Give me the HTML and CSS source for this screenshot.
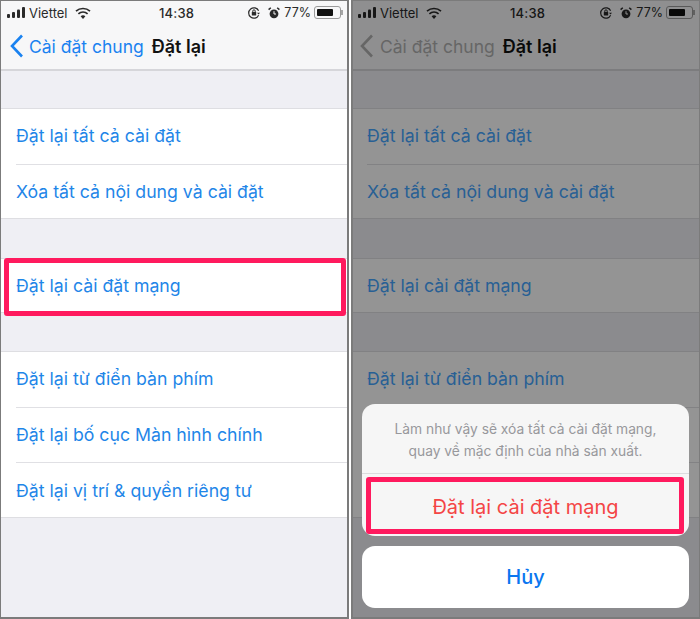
FILE: index.html
```html
<!DOCTYPE html>
<html lang="vi">
<head>
    <meta charset="UTF-8">
    <title>Đặt lại</title>
    <link rel="stylesheet" href="styles.css">
</head>
<body>
    <svg class="sprites" width="0" height="0">
        <symbol id="signal" viewBox="0 0 18 11">
            <rect x="0" y="7" width="3" height="4" rx="1"/>
            <rect x="5" y="5" width="3" height="6" rx="1"/>
            <rect x="10" y="2.5" width="3" height="8.5" rx="1"/>
            <rect x="15" y="0" width="3" height="11" rx="1"/>
        </symbol>
        <symbol id="wifi" viewBox="0 0 16 12">
            <path d="M8 12 5.6 9.2a3.6 3.6 0 0 1 4.8 0Z"/>
            <path d="M1 4.2a10.4 10.4 0 0 1 14 0" fill="none" stroke="currentColor" stroke-width="1.7"/>
            <path d="M3.4 6.8a6.8 6.8 0 0 1 9.2 0" fill="none" stroke="currentColor" stroke-width="1.7"/>
        </symbol>
        <symbol id="lock" viewBox="0 0 12 12">
            <path d="M10.6 8.2A5.2 5.2 0 1 1 10.6 3.8" fill="none" stroke="currentColor" stroke-width="1.2"/>
            <rect x="3.8" y="5" width="4.4" height="3.4" rx=".5"/>
            <path d="M4.8 5V4a1.2 1.2 0 0 1 2.4 0v1" fill="none" stroke="currentColor"/>
            <path d="M9 5.8h3L10.5 7.6Z"/>
        </symbol>
        <symbol id="alarm" viewBox="0 0 12 12">
            <circle cx="6" cy="6.8" r="4.4"/>
            <path d="M.6 2.6 2.8.7M11.4 2.6 9.2.7" stroke="currentColor" stroke-width="1.5" fill="none"/>
            <path d="M6 4.2v2.8h2" stroke="#f7f7f7" fill="none"/>
        </symbol>
    </svg>

    <div class="screens">
        <!-- Reset list -->
        <section class="phone">
            <header class="topbar">
                <div class="status">
                    <div class="status-left">
                        <svg class="ic-signal"><use href="#signal"/></svg>
                        <span>Viettel</span>
                        <svg class="ic-wifi"><use href="#wifi"/></svg>
                    </div>
                    <div class="status-time">14:38</div>
                    <div class="status-right">
                        <svg class="ic-small"><use href="#lock"/></svg>
                        <svg class="ic-small ic-alarm"><use href="#alarm"/></svg>
                        <span class="status-pct">77%</span>
                        <div class="battery"><div class="battery-fill"></div></div>
                    </div>
                </div>
                <nav class="navbar">
                    <svg class="back-chevron" viewBox="0 0 15 24"><path d="M13 1.5 3 12l10 10.5"/></svg>
                    <span class="back-label">Cài đặt chung</span>
                    <span class="nav-title">Đặt lại</span>
                </nav>
            </header>
            <div class="settings">
                <ul class="group">
                    <li>Đặt lại tất cả cài đặt</li>
                    <li>Xóa tất cả nội dung và cài đặt</li>
                </ul>
                <ul class="group group-network">
                    <li>Đặt lại cài đặt mạng</li>
                </ul>
                <ul class="group group-last">
                    <li>Đặt lại từ điển bàn phím</li>
                    <li>Đặt lại bố cục Màn hình chính</li>
                    <li>Đặt lại vị trí &amp; quyền riêng tư</li>
                </ul>
            </div>
            <div class="mark mark-row"></div>
        </section>

        <!-- Same list, with the confirm sheet open -->
        <section class="phone phone-dim">
            <header class="topbar">
                <div class="status">
                    <div class="status-left">
                        <svg class="ic-signal"><use href="#signal"/></svg>
                        <span>Viettel</span>
                        <svg class="ic-wifi"><use href="#wifi"/></svg>
                    </div>
                    <div class="status-time">14:38</div>
                    <div class="status-right">
                        <svg class="ic-small"><use href="#lock"/></svg>
                        <svg class="ic-small ic-alarm"><use href="#alarm"/></svg>
                        <span class="status-pct">77%</span>
                        <div class="battery"><div class="battery-fill"></div></div>
                    </div>
                </div>
                <nav class="navbar">
                    <svg class="back-chevron" viewBox="0 0 15 24"><path d="M13 1.5 3 12l10 10.5"/></svg>
                    <span class="back-label">Cài đặt chung</span>
                    <span class="nav-title">Đặt lại</span>
                </nav>
            </header>
            <div class="settings">
                <ul class="group">
                    <li>Đặt lại tất cả cài đặt</li>
                    <li>Xóa tất cả nội dung và cài đặt</li>
                </ul>
                <ul class="group group-network">
                    <li>Đặt lại cài đặt mạng</li>
                </ul>
                <ul class="group group-last">
                    <li>Đặt lại từ điển bàn phím</li>
                    <li></li>
                    <li></li>
                </ul>
            </div>
            <div class="scrim"></div>
            <div class="sheet">
                <div class="sheet-card">
                    <p class="sheet-msg">Làm như vậy sẽ xóa tất cả cài đặt mạng,<br>quay về mặc định của nhà sản xuất.</p>
                    <div class="sheet-action">Đặt lại cài đặt mạng</div>
                    <div class="mark mark-action"></div>
                </div>
                <div class="sheet-cancel">Hủy</div>
            </div>
        </section>
    </div>
</body>
</html>
```

FILE: styles.css
```css
/* Page */
body {
    margin: 0;
    background-color: white;
    font-family: "Inter", "Liberation Sans", sans-serif;
}

.sprites {
    position: absolute;
}

.screens {
    display: flex;
    justify-content: space-between;
    width: 700px;
    height: 619px;
}

/* Phone frame */
.phone {
    position: relative;
    box-sizing: border-box;
    width: 349px;
    height: 619px;
    overflow: hidden;
    background-color: #efeff4;
    border: 1px solid #7b7b7b;
    border-width: 1px 2px 2px 1px;
}

.phone-dim {
    border-width: 1px 1px 2px 2px;
}

/* Status and nav bar */
.topbar {
    height: 70px;
    box-sizing: border-box;
    background-color: #f7f7f8;
    border-bottom: 2px solid #d6d6da;
    color: #111;
}

.status {
    position: relative;
    display: flex;
    justify-content: space-between;
    align-items: center;
    height: 23px;
    padding: 0 4px 0 6px;
    font-size: 13px;
    color: #2a2a2a;
}

.status-left,
.status-right {
    display: flex;
    align-items: center;
}

.status-time {
    position: absolute;
    left: 158px;
    font-weight: 500;
    letter-spacing: 0.2px;
}

.status-pct {
    font-size: 12.5px;
}

.ic-signal {
    width: 18px;
    height: 11px;
    margin-right: 4px;
    fill: currentColor;
}

.ic-wifi {
    width: 16px;
    height: 12px;
    margin-left: 7px;
    fill: currentColor;
}

.ic-small {
    width: 12px;
    height: 12px;
    margin-right: 8px;
    fill: currentColor;
}

.ic-alarm {
    margin-right: 4px;
}

.battery {
    position: relative;
    box-sizing: border-box;
    width: 27px;
    height: 13px;
    margin-left: 3px;
    margin-right: 2px;
    padding: 2px;
    border: 1px solid #9a9a9a;
    border-radius: 3px;
}

.battery::after {
    content: "";
    position: absolute;
    right: -3px;
    top: 3px;
    width: 2px;
    height: 5px;
    background-color: #a5a5a5;
}

.battery-fill {
    width: 77%;
    height: 100%;
    background-color: #111;
    border-radius: 1px;
}

.navbar {
    display: flex;
    align-items: center;
    height: 44px;
    padding-left: 8px;
}

.back-chevron {
    width: 15px;
    height: 24px;
    margin-right: 5px;
    fill: none;
    stroke: #1a82f0;
    stroke-width: 2.6;
}

.back-label {
    font-size: 17.5px;
    color: #1a82f0;
}

.nav-title {
    margin-left: 8px;
    font-size: 18px;
    font-weight: 600;
    color: #111;
}

/* Settings list */
.settings {
    padding-top: 37px;
}

.group {
    margin: 0;
    padding: 0 0 0 15px;
    list-style: none;
    background-color: white;
    border-top: 1px solid #dedee2;
    border-bottom: 1px solid #dedee2;
}

.group li {
    display: flex;
    align-items: center;
    box-sizing: border-box;
    height: 55.5px;
    padding-bottom: 1px;
    font-size: 17.7px;
    color: #1f86e8;
    border-bottom: 1px solid #e0e0e4;
}

.group li:last-child {
    height: 53.5px;
    padding-top: 1px;
    padding-bottom: 0;
    border-bottom: none;
}

.group-network {
    margin-top: 38.5px;
}

.group-last {
    margin-top: 38px;
}

/* Second phone: inactive tint under the scrim */
.phone-dim .status {
    padding-left: 5px;
}

.phone-dim .status-time {
    left: 157px;
}

.phone-dim .navbar {
    padding-left: 6px;
}

.phone-dim .back-chevron {
    margin-right: 6px;
    stroke: #b0b0b0;
}

.phone-dim .back-label {
    color: #b0b0b0;
}

.phone-dim .group {
    padding-left: 14px;
}

.phone-dim .group li {
    color: #45a5ff;
}

/* Dimmed layer */
.scrim {
    position: absolute;
    inset: 0;
    background-color: rgba(0, 0, 0, 0.42);
}

/* Confirm sheet */
.sheet {
    position: absolute;
    left: 9px;
    right: 10px;
    bottom: 9px;
}

.sheet-card {
    position: relative;
    height: 132px;
    margin-bottom: 10px;
    background-color: #f6f6f6;
    border-radius: 13px;
}

.sheet-msg {
    margin: 0;
    height: 70px;
    box-sizing: border-box;
    padding-top: 14px;
    font-size: 13.8px;
    line-height: 22px;
    text-align: center;
    color: #98989c;
    border-bottom: 1px solid #dcdcde;
}

.sheet-action {
    display: flex;
    align-items: center;
    justify-content: center;
    box-sizing: border-box;
    height: 62px;
    padding-top: 4px;
    font-size: 20px;
    color: #f44545;
}

.sheet-cancel {
    display: flex;
    align-items: center;
    justify-content: center;
    height: 62px;
    font-size: 20px;
    font-weight: 500;
    color: #0a76f0;
    background-color: white;
    border-radius: 13px;
}

/* Red annotation boxes */
.mark {
    position: absolute;
    box-sizing: border-box;
    border: 5px solid #ff1a5e;
    border-radius: 3px;
}

.mark-row {
    left: 3px;
    top: 257px;
    width: 342px;
    height: 58px;
}

.mark-action {
    left: 4px;
    top: 73px;
    width: 318px;
    height: 57px;
}
```
